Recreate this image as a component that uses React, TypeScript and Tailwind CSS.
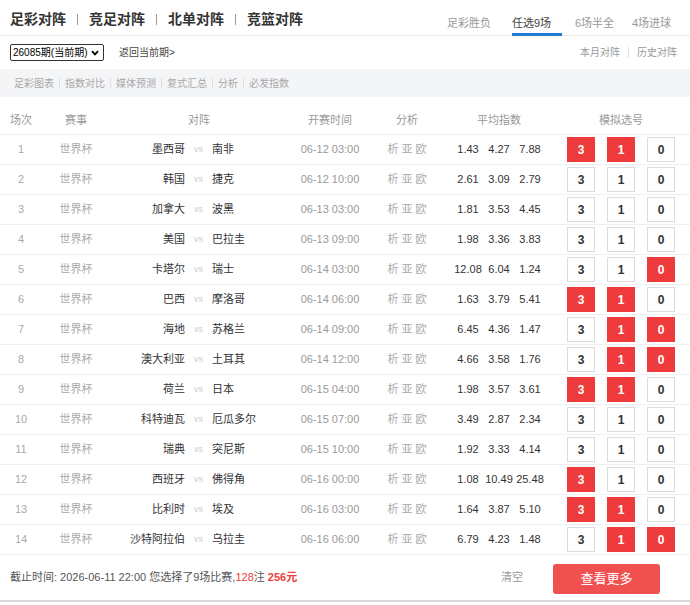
import React from "react";

type Row = {
  n: number;
  home: string;
  away: string;
  time: string;
  odds: [string, string, string];
  sel: [boolean, boolean, boolean];
};

const rows: Row[] = [
  { n: 1, home: "墨西哥", away: "南非", time: "06-12 03:00", odds: ["1.43", "4.27", "7.88"], sel: [true, true, false] },
  { n: 2, home: "韩国", away: "捷克", time: "06-12 10:00", odds: ["2.61", "3.09", "2.79"], sel: [false, false, false] },
  { n: 3, home: "加拿大", away: "波黑", time: "06-13 03:00", odds: ["1.81", "3.53", "4.45"], sel: [false, false, false] },
  { n: 4, home: "美国", away: "巴拉圭", time: "06-13 09:00", odds: ["1.98", "3.36", "3.83"], sel: [false, false, false] },
  { n: 5, home: "卡塔尔", away: "瑞士", time: "06-14 03:00", odds: ["12.08", "6.04", "1.24"], sel: [false, false, true] },
  { n: 6, home: "巴西", away: "摩洛哥", time: "06-14 06:00", odds: ["1.63", "3.79", "5.41"], sel: [true, true, false] },
  { n: 7, home: "海地", away: "苏格兰", time: "06-14 09:00", odds: ["6.45", "4.36", "1.47"], sel: [false, true, true] },
  { n: 8, home: "澳大利亚", away: "土耳其", time: "06-14 12:00", odds: ["4.66", "3.58", "1.76"], sel: [false, true, true] },
  { n: 9, home: "荷兰", away: "日本", time: "06-15 04:00", odds: ["1.98", "3.57", "3.61"], sel: [true, true, false] },
  { n: 10, home: "科特迪瓦", away: "厄瓜多尔", time: "06-15 07:00", odds: ["3.49", "2.87", "2.34"], sel: [false, false, false] },
  { n: 11, home: "瑞典", away: "突尼斯", time: "06-15 10:00", odds: ["1.92", "3.33", "4.14"], sel: [false, false, false] },
  { n: 12, home: "西班牙", away: "佛得角", time: "06-16 00:00", odds: ["1.08", "10.49", "25.48"], sel: [true, false, false] },
  { n: 13, home: "比利时", away: "埃及", time: "06-16 03:00", odds: ["1.64", "3.87", "5.10"], sel: [true, true, false] },
  { n: 14, home: "沙特阿拉伯", away: "乌拉圭", time: "06-16 06:00", odds: ["6.79", "4.23", "1.48"], sel: [false, true, true] },
];

function Box({ label, on }: { label: string; on: boolean }) {
  return (
    <div
      className={
        on
          ? "w-[28px] h-[25px] flex items-center justify-center bg-[#ef3b3b] border border-[#ef3b3b] text-white text-[12px] font-bold"
          : "w-[28px] h-[25px] flex items-center justify-center bg-white border border-[#dcdcdc] text-[#333] text-[12px] font-bold"
      }
    >
      {label}
    </div>
  );
}

export default function App() {
  const titles = ["足彩对阵", "竞足对阵", "北单对阵", "竞篮对阵"];
  const links = ["足彩图表", "指数对比", "媒体预测", "复式汇总", "分析", "必发指数"];
  return (
    <div className="w-[690px] h-[605px] bg-white font-['Liberation_Sans','Noto_Sans_CJK_SC',sans-serif] text-[#333] overflow-hidden">
      {/* title row */}
      <div className="flex h-[36px] border-b border-[#ececec]">
        <div className="flex items-center pl-[10px] pt-[3px]">
          {titles.map((t, i) => (
            <React.Fragment key={t}>
              {i > 0 && <span className="mx-[11px] w-px h-[11px] bg-[#999]" />}
              <span className="text-[14px] font-bold text-[#333] leading-[16px]">{t}</span>
            </React.Fragment>
          ))}
        </div>
        <div className="flex ml-auto h-full">
          <div className="relative w-[65px] h-full">
            <div className="pt-[16px] leading-[14px] text-[11px] text-[#999]">足彩胜负</div>
          </div>
          <div className="relative w-[63px] h-full">
            <div className="pt-[16px] leading-[14px] text-[11px] text-[#444]">任选9场</div>
            <div className="absolute left-0 bottom-[-1px] w-[50px] h-[3px] bg-[#2479d3]" />
          </div>
          <div className="relative w-[57px] h-full">
            <div className="pt-[16px] leading-[14px] text-[11px] text-[#999]">6场半全</div>
          </div>
          <div className="relative w-[58px] h-full">
            <div className="pt-[16px] leading-[14px] text-[11px] text-[#999]">4场进球</div>
          </div>
        </div>
      </div>

      {/* period row */}
      <div className="flex items-center h-[33px] pl-[10px] pr-[13px]">
        <div className="flex items-center w-[94px] h-[17px] border border-[#333] rounded-[2px] pl-[2px] pr-[4px] text-[10px] text-black leading-none whitespace-nowrap">
          <span>26085期(当前期)</span>
          <svg className="ml-auto shrink-0" width="8" height="6" viewBox="0 0 8 6">
            <path d="M1 1.2 L4 4.4 L7 1.2" fill="none" stroke="#000" strokeWidth="1.8" />
          </svg>
        </div>
        <span className="ml-[15px] text-[10px] text-[#444]">返回当前期&gt;</span>
        <div className="ml-auto flex items-center text-[10px] text-[#999]">
          <span>本月对阵</span>
          <span className="mx-[8px] w-px h-[11px] bg-[#e2e2e2]" />
          <span>历史对阵</span>
        </div>
      </div>

      {/* link band */}
      <div className="flex items-center h-[28px] bg-[#f4f5f7] pl-[14px]">
        {links.map((l, i) => (
          <React.Fragment key={l}>
            {i > 0 && <span className="mx-[5px] w-px h-[10px] bg-[#dedede]" />}
            <span className="text-[10px] text-[#a8a8a8]">{l}</span>
          </React.Fragment>
        ))}
      </div>

      {/* table header */}
      <div className="flex items-center mt-[8px] h-[30px] pt-[2px] border-b border-[#f0f0f0] text-[11px] text-[#999]">
        <div className="w-[42px] text-center">场次</div>
        <div className="w-[68px] text-center">赛事</div>
        <div className="w-[178px] text-center">对阵</div>
        <div className="w-[84px] text-center">开赛时间</div>
        <div className="w-[70px] text-center">分析</div>
        <div className="w-[114px] text-center">平均指数</div>
        <div className="w-[130px] text-center">模拟选号</div>
      </div>

      {/* rows */}
      {rows.map((r) => (
        <div key={r.n} className="flex items-center h-[30px] border-b border-[#f0f0f0] text-[11px]">
          <div className="w-[42px] text-center text-[#aaa]">{r.n}</div>
          <div className="w-[68px] text-center text-[#aaa]">世界杯</div>
          <div className="w-[178px] flex items-center">
            <div className="w-[75px] text-right text-[#333]">{r.home}</div>
            <div className="w-[27px] text-center text-[9px] text-[#ccc]">vs</div>
            <div className="w-[76px] text-left text-[#333]">{r.away}</div>
          </div>
          <div className="w-[84px] text-center text-[#999]">{r.time}</div>
          <div className="w-[70px] text-center text-[#aaa]">析 亚 欧</div>
          <div className="w-[114px] flex justify-center text-[#333]">
            {r.odds.map((o, i) => (
              <span key={i} className="w-[31px] text-center">{o}</span>
            ))}
          </div>
          <div className="w-[130px] flex justify-center gap-[12px]">
            <Box label="3" on={r.sel[0]} />
            <Box label="1" on={r.sel[1]} />
            <Box label="0" on={r.sel[2]} />
          </div>
        </div>
      ))}

      {/* footer */}
      <div className="flex items-center h-[47px] pl-[10px] pr-[30px] border-b-2 border-[#d9d9d9]">
        <div className="text-[11px] text-[#555]">
          截止时间: 2026-06-11 22:00 您选择了9场比赛,<span className="text-[#ef3b3b]">128</span>注{" "}
          <span className="text-[#ef3b3b] font-bold">256元</span>
        </div>
        <span className="ml-auto text-[11px] text-[#999]">清空</span>
        <div className="ml-[30px] mt-[3px] w-[107px] h-[30px] rounded-[3px] bg-[#f05050] flex items-center justify-center text-[13px] text-white">
          查看更多
        </div>
      </div>
    </div>
  );
}
